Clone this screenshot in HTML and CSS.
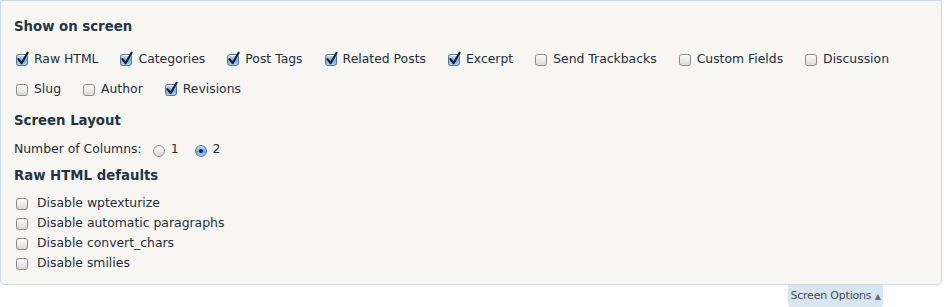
FILE: index.html
```html
<!DOCTYPE html>
<html lang="en">
<head>
  <meta charset="UTF-8">
  <title>Screen Options</title>
  <link rel="stylesheet" href="styles.css">
</head>
<body>
  <div class="screen-options">
    <h5>Show on screen</h5>
    <div class="toggles">
      <label class="opt"><span class="cb on"></span>Raw HTML</label>
      <label class="opt"><span class="cb on"></span>Categories</label>
      <label class="opt"><span class="cb on"></span>Post Tags</label>
      <label class="opt"><span class="cb on"></span>Related Posts</label>
      <label class="opt"><span class="cb on"></span>Excerpt</label>
      <label class="opt"><span class="cb"></span>Send Trackbacks</label>
      <label class="opt"><span class="cb"></span>Custom Fields</label>
      <label class="opt"><span class="cb"></span>Discussion</label>
    </div>
    <div class="toggles second">
      <label class="opt"><span class="cb"></span>Slug</label>
      <label class="opt"><span class="cb"></span>Author</label>
      <label class="opt"><span class="cb on"></span>Revisions</label>
    </div>

    <h5 class="gap">Screen Layout</h5>
    <div class="columns">
      <span>Number of Columns:</span>
      <label class="opt"><span class="rd"></span>1</label>
      <label class="opt"><span class="rd on"></span>2</label>
    </div>

    <h5 class="tight">Raw HTML defaults</h5>
    <ul class="defaults">
      <li><span class="cb"></span>Disable wptexturize</li>
      <li><span class="cb"></span>Disable automatic paragraphs</li>
      <li><span class="cb"></span>Disable convert_chars</li>
      <li><span class="cb"></span>Disable smilies</li>
    </ul>
  </div>

  <div class="tab-row">
    <div class="tab">Screen Options <span class="arrow">&#9650;</span></div>
  </div>

  <script>
    // draw the check marks into every checked box
    var tick = '<svg width="16" height="16" viewBox="0 0 16 16"><path d="M3.5 8.2 L6.6 12.2 L12.6 1.8" fill="none" stroke="#14223a" stroke-width="2.2" stroke-linecap="round" stroke-linejoin="round"/></svg>';
    document.querySelectorAll('.cb.on').forEach(function (el) {
      el.innerHTML = tick;
    });
  </script>
</body>
</html>
```
FILE: styles.css
```css
body {
  margin: 0;
  font-family: "DejaVu Sans", Verdana, sans-serif;
  font-size: 12.4px;
  color: #1f2f40;
  background: #fff;
}
.screen-options {
  height: 265px;
  padding: 18px 0 0 13px;
  width: 927px;
  border: 1px solid #c9dae8;
  border-radius: 0 0 5px 5px;
  background: #f7f6f2;
}
h5 {
  margin: 0;
  font-size: 13.3px;
  line-height: 16px;
  font-weight: bold;
  color: #233547;
}
h5.gap {
  margin-top: 16px;
}
h5.tight {
  margin-top: 11px;
}
.toggles {
  display: flex;
  margin-top: 16px;
  line-height: 16px;
}
.toggles.second {
  margin-top: 14px;
}
.opt {
  display: inline-flex;
  align-items: center;
  margin-right: 20px;
}
.cb {
  position: relative;
  display: inline-block;
  width: 10px;
  height: 10px;
  margin: 1px 6px 0 2px;
  border: 1px solid #8d8d8d;
  border-radius: 3px;
  background: linear-gradient(#fdfdfd, #d9d9d9);
  box-shadow: inset 0 1px 0 #fff;
}
.cb.on {
  border-color: #51759b;
  background: linear-gradient(#c8e0f6, #7cb0e6 55%, #a9d0f3);
}
.cb svg {
  position: absolute;
  left: -2px;
  top: -4px;
}
.columns {
  display: flex;
  align-items: center;
  margin-top: 12px;
  line-height: 16px;
}
.columns > span {
  margin-right: 11px;
}
.columns .opt {
  margin-right: 16px;
}
.rd {
  display: inline-block;
  width: 10px;
  height: 10px;
  margin: 3px 6px 0 0;
  border: 1px solid #8d8d8d;
  border-radius: 50%;
  background: linear-gradient(#fdfdfd, #d6d6d6);
  position: relative;
}
.rd.on {
  border-color: #51759b;
  background: linear-gradient(#c8e0f6, #6fa7e2 55%, #a9d0f3);
}
.rd.on::after {
  content: "";
  position: absolute;
  left: 3px;
  top: 3px;
  width: 4px;
  height: 4px;
  border-radius: 50%;
  background: #14223a;
}
.defaults {
  list-style: none;
  margin: 9px 0 0;
  padding: 0;
  line-height: 20px;
}
.defaults li {
  display: flex;
  align-items: center;
}
.defaults .cb {
  margin-right: 9px;
}
.tab-row {
  display: flex;
  justify-content: flex-end;
  padding-right: 61px;
}
.tab {
  width: 95px;
  height: 22px;
  line-height: 22px;
  text-align: center;
  font-size: 11px;
  letter-spacing: -0.2px;
  color: #464c53;
  background: #dae6ef;
  border-radius: 0 0 4px 4px;
}
.arrow {
  font-size: 8px;
  color: #6d6d6d;
}
```
